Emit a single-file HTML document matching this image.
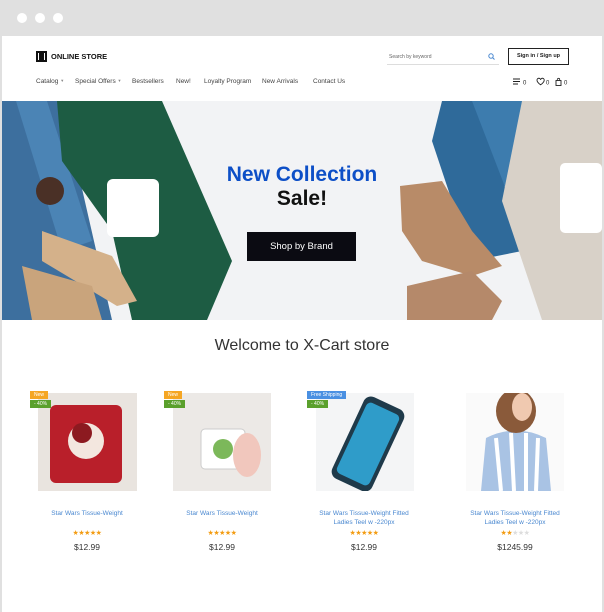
<!DOCTYPE html>
<html><head><meta charset="utf-8"><style>
*{margin:0;padding:0;box-sizing:border-box}
body{width:604px;height:612px;background:#e0e0e0;font-family:"Liberation Sans",sans-serif;position:relative;overflow:hidden}
.win{position:absolute;left:2px;top:36px;width:600px;height:576px;background:#fff}
.dot{position:absolute;top:13px;width:10px;height:10px;border-radius:50%;background:#fff}
.a{position:absolute;white-space:nowrap}
.nav{font-size:6.5px;color:#444;top:78px;line-height:8px;height:8px}
.nav i{font-style:normal;font-size:4px;color:#888;position:relative;top:-1px;line-height:0}
.t{font-size:6.5px;color:#4a88d0;text-align:center;width:120px;line-height:9px}
.p{font-size:8.5px;color:#333;text-align:center;width:120px}
.st{font-size:7px;color:#f39c12;text-align:center;width:120px;letter-spacing:-0.5px}
.b{position:absolute;font-size:5px;color:#fff;padding:0 4px;height:8px;line-height:8px}
</style></head><body>
<div class="dot" style="left:17px"></div><div class="dot" style="left:35px"></div><div class="dot" style="left:53px"></div>
<div class="win"></div>
<div class="a" style="left:36px;top:51px;width:11px;height:11px;background:#111"></div>
<div class="a" style="left:38px;top:53px;width:7px;height:7px;border:1.5px solid #fff;border-top:none;border-bottom:none"></div>
<div class="a" style="left:51px;top:52px;font-size:7.5px;font-weight:bold;color:#111">ONLINE STORE</div>
<div class="a" style="left:389px;top:54px;font-size:5px;color:#666">Search by keyword</div>
<svg class="a" style="left:488px;top:53px" width="7" height="7"><circle cx="3" cy="3" r="2.2" fill="none" stroke="#4a88d0" stroke-width="1"/><path d="M4.6 4.6 L6.5 6.5" stroke="#4a88d0" stroke-width="1"/></svg>
<div class="a" style="left:387px;top:64px;width:112px;height:1px;background:#ddd"></div>
<div class="a" style="left:508px;top:48px;width:61px;height:17px;border:1.3px solid #222;font-size:5.5px;font-weight:bold;text-align:center;line-height:14px;color:#222">Sign in / Sign up</div>
<div class="a nav" style="left:36px">Catalog <i>▼</i></div>
<div class="a nav" style="left:75px">Special Offers <i>▼</i></div>
<div class="a nav" style="left:132px">Bestsellers</div>
<div class="a nav" style="left:176px">New!</div>
<div class="a nav" style="left:204px">Loyalty Program</div>
<div class="a nav" style="left:262px">New Arrivals</div>
<div class="a nav" style="left:313px">Contact Us</div>
<svg class="a" style="left:512px;top:77px" width="58" height="10">
<path d="M1 2h7M1 4.5h7M1 7h5" stroke="#222" stroke-width="1"/>
<text x="11" y="7.5" font-size="6" fill="#222" font-family="Liberation Sans">0</text>
<path d="M25 3.2 a1.8 1.8 0 0 1 3.6 -0.3 a1.8 1.8 0 0 1 3.6 0.3 q0 2 -3.6 4.6 q-3.6 -2.6 -3.6 -4.6z" fill="none" stroke="#222" stroke-width="0.9"/>
<text x="34" y="7.5" font-size="6" fill="#222" font-family="Liberation Sans">0</text>
<rect x="44" y="3.5" width="5" height="5" fill="none" stroke="#222" stroke-width="0.9"/><path d="M45.3 3.5 v-1 a1.2 1.2 0 0 1 2.4 0 v1" fill="none" stroke="#222" stroke-width="0.8"/>
<text x="52" y="7.5" font-size="6" fill="#222" font-family="Liberation Sans">0</text>
</svg>
<svg class="a" style="left:2px;top:101px" width="600" height="219" viewBox="0 0 600 219">
<rect width="600" height="219" fill="#f2f3f5"/>
<path d="M0 0 L60 0 L110 219 L0 219Z" fill="#3d6f9e"/>
<path d="M14 0 L45 0 L90 140 L60 150Z" fill="#4b84b5"/>
<path d="M55 0 L160 0 L230 160 L205 219 L130 219 L110 130 L60 60Z" fill="#1d5c43"/>
<path d="M40 130 L110 155 L135 200 L115 205 L40 160Z" fill="#d4b18a"/>
<path d="M20 165 L90 185 L100 219 L30 219Z" fill="#c9a47c"/>
<rect x="105" y="78" width="52" height="58" rx="6" fill="#fff"/>
<circle cx="48" cy="90" r="14" fill="#4a3026"/>
<path d="M440 0 L480 0 L520 150 L470 160 L430 40Z" fill="#2f6a9a"/>
<path d="M470 0 L520 0 L560 120 L520 130Z" fill="#3d7cae"/>
<path d="M520 0 L600 0 L600 219 L540 219 L500 100Z" fill="#d8d1c8"/>
<path d="M398 85 L440 80 L470 130 L500 165 L470 175 L420 160 L400 130Z" fill="#b88b68"/>
<path d="M405 185 L470 170 L500 200 L490 219 L405 219Z" fill="#b5896a"/>
<rect x="558" y="62" width="42" height="70" rx="5" fill="#fff"/>
</svg>
<div class="a" style="left:0;width:604px;top:163px;text-align:center;font-size:21px;font-weight:bold;color:#0d4fc7">New Collection</div>
<div class="a" style="left:0;width:604px;top:187px;text-align:center;font-size:21px;font-weight:bold;color:#111">Sale!</div>
<div class="a" style="left:247px;top:232px;width:109px;height:29px;background:#0b0b12;color:#fff;font-size:9.5px;text-align:center;line-height:29px">Shop by Brand</div>
<div class="a" style="left:0;width:604px;top:337px;text-align:center;font-size:16px;color:#333">Welcome to X-Cart store</div>

<svg class="a" style="left:38px;top:393px" width="99" height="98"><rect width="99" height="98" fill="#e9e4df"/><rect x="12" y="12" width="72" height="78" rx="6" fill="#b91f2a"/><circle cx="48" cy="48" r="18" fill="#f3e7df"/><circle cx="44" cy="40" r="10" fill="#8c1a20"/></svg>
<svg class="a" style="left:173px;top:393px" width="98" height="98"><rect width="98" height="98" fill="#ece9e6"/><rect x="28" y="36" width="44" height="40" rx="4" fill="#fff" stroke="#ccc"/><circle cx="50" cy="56" r="10" fill="#7cb85a"/><ellipse cx="74" cy="62" rx="14" ry="22" fill="#f1c7bd"/></svg>
<svg class="a" style="left:316px;top:393px" width="98" height="98"><rect width="98" height="98" fill="#f4f5f6"/><rect x="30" y="6" width="44" height="90" rx="8" fill="#1f3a4a" transform="rotate(25 52 51)"/><rect x="34" y="12" width="36" height="78" rx="5" fill="#2f9cc9" transform="rotate(25 52 51)"/></svg>
<svg class="a" style="left:466px;top:393px" width="98" height="98"><rect width="98" height="98" fill="#fafafa"/><path d="M20 45 Q50 30 80 45 L85 98 L15 98Z" fill="#a9c3e4"/><path d="M30 45 L35 98 M45 40 L48 98 M60 40 L60 98 M72 45 L70 98" stroke="#fff" stroke-width="4"/><ellipse cx="50" cy="18" rx="20" ry="22" fill="#8a5a3a"/><ellipse cx="56" cy="14" rx="10" ry="14" fill="#f0c9b0"/></svg>

<div class="b" style="left:30px;top:391px;background:#f5a623">New</div>
<div class="b" style="left:30px;top:400px;background:#5aa02c">- 40%</div>
<div class="b" style="left:164px;top:391px;background:#f5a623">New</div>
<div class="b" style="left:164px;top:400px;background:#5aa02c">- 40%</div>
<div class="b" style="left:307px;top:391px;background:#4a90e2">Free Shipping</div>
<div class="b" style="left:307px;top:400px;background:#5aa02c">- 40%</div>

<div class="a t" style="left:27px;top:509px">Star Wars Tissue-Weight</div>
<div class="a t" style="left:162px;top:509px">Star Wars Tissue-Weight</div>
<div class="a t" style="left:304px;top:509px">Star Wars Tissue-Weight Fitted<br>Ladies Teel w -220px</div>
<div class="a t" style="left:455px;top:509px">Star Wars Tissue-Weight Fitted<br>Ladies Teel w -220px</div>
<div class="a st" style="left:27px;top:529px">★★★★★</div>
<div class="a st" style="left:162px;top:529px">★★★★★</div>
<div class="a st" style="left:304px;top:529px">★★★★★</div>
<div class="a st" style="left:455px;top:529px">★★<span style="color:#ddd">★★★</span></div>
<div class="a p" style="left:27px;top:542px">$12.99</div>
<div class="a p" style="left:162px;top:542px">$12.99</div>
<div class="a p" style="left:304px;top:542px">$12.99</div>
<div class="a p" style="left:455px;top:542px">$1245.99</div>
</body></html>
